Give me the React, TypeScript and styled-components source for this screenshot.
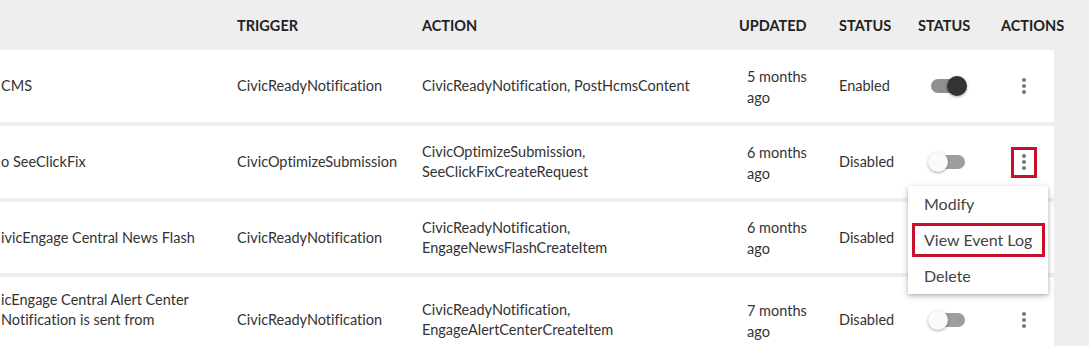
import styled, { createGlobalStyle } from "styled-components";

const GlobalStyle = createGlobalStyle`
  html, body {
    margin: 0;
    padding: 0;
    background: #eeeeee;
    font-family: Lato, "Open Sans", sans-serif;
    color: #333333;
    overflow: hidden;
    font-variant-ligatures: none;
  }
`;

type Workflow = {
  name: string[];
  trigger: string;
  action: string[];
  updated: string;
  enabled: boolean;
  height: number;
  nameTop?: number;
};

const workflows: Workflow[] = [
  {
    name: ["CMS"],
    trigger: "CivicReadyNotification",
    action: ["CivicReadyNotification, PostHcmsContent"],
    updated: "5 months ago",
    enabled: true,
    height: 72,
  },
  {
    name: ["o SeeClickFix"],
    trigger: "CivicOptimizeSubmission",
    action: ["CivicOptimizeSubmission,", "SeeClickFixCreateRequest"],
    updated: "6 months ago",
    enabled: false,
    height: 72,
  },
  {
    name: ["ivicEngage Central News Flash"],
    trigger: "CivicReadyNotification",
    action: ["CivicReadyNotification,", "EngageNewsFlashCreateItem"],
    updated: "6 months ago",
    enabled: false,
    height: 71,
  },
  {
    name: ["icEngage Central Alert Center", "Notification is sent from"],
    trigger: "CivicReadyNotification",
    action: ["CivicReadyNotification,", "EngageAlertCenterCreateItem"],
    updated: "7 months ago",
    enabled: false,
    height: 86,
    nameTop: 13,
  },
];

const columns = "229px 185px 317px 100px 79px 83px 61px";

const KebabIcon = () => (
  <svg width="4" height="16" viewBox="0 0 4 16">
    <circle cx="2" cy="2" r="2" fill="#757575" />
    <circle cx="2" cy="8" r="2" fill="#757575" />
    <circle cx="2" cy="14" r="2" fill="#757575" />
  </svg>
);

const App = () => {
  return (
    <>
      <GlobalStyle />
      <Page>
        <HeaderRow>
          <HeadCell />
          <HeadCell>Trigger</HeadCell>
          <HeadCell>Action</HeadCell>
          <HeadCell>Updated</HeadCell>
          <HeadCell>Status</HeadCell>
          <HeadCell>Status</HeadCell>
          <HeadCell>Actions</HeadCell>
        </HeaderRow>
        {workflows.map((w, i) => (
          <Row key={i} $height={w.height}>
            <NameCell $top={w.nameTop}>
              {w.name.map((line) => (
                <Line key={line}>{line}</Line>
              ))}
            </NameCell>
            <Cell>{w.trigger}</Cell>
            <Cell>
              {w.action.map((line) => (
                <Line key={line}>{line}</Line>
              ))}
            </Cell>
            <UpdatedCell>{w.updated}</UpdatedCell>
            <Cell>{w.enabled ? "Enabled" : "Disabled"}</Cell>
            <ToggleCell>
              <Switch $on={w.enabled}>
                <Thumb $on={w.enabled} />
              </Switch>
            </ToggleCell>
            <ActionsCell>
              <KebabButton $highlight={i === 1}>
                <KebabIcon />
              </KebabButton>
              {i === 1 && (
                <Menu>
                  <MenuItem>Modify</MenuItem>
                  <MenuItem $highlight>View Event Log</MenuItem>
                  <MenuItem>Delete</MenuItem>
                </Menu>
              )}
            </ActionsCell>
          </Row>
        ))}
      </Page>
    </>
  );
};

export default App;

const Page = styled.div`
  width: 1054px;
  display: flex;
  flex-direction: column;
`;

const HeaderRow = styled.div`
  display: grid;
  grid-template-columns: ${columns};
  height: 50px;
  align-items: center;
`;

const HeadCell = styled.div`
  padding-left: 8px;
  font-size: 14.5px;
  font-weight: 700;
  text-transform: uppercase;
  color: #222222;
  white-space: nowrap;
`;

const Row = styled.div<{ $height: number }>`
  display: grid;
  grid-template-columns: ${columns};
  height: ${(p) => p.$height}px;
  flex-shrink: 0;
  margin-bottom: 4px;
  align-items: center;
  background: #ffffff;
  font-size: 14.5px;
  line-height: 20px;
  color: #333333;
`;

const Cell = styled.div`
  padding-left: 8px;
`;

const NameCell = styled.div<{ $top?: number }>`
  padding-left: 1px;
  white-space: nowrap;
  ${(p) =>
    p.$top !== undefined &&
    `
    align-self: start;
    padding-top: ${p.$top}px;
  `}
`;

const Line = styled.div`
  white-space: nowrap;
`;

const UpdatedCell = styled.div`
  padding: 1px 14px 0 16px;
  line-height: 21px;
`;

const ToggleCell = styled.div`
  padding-left: 21px;
  display: flex;
  align-items: center;
`;

const Switch = styled.div<{ $on: boolean }>`
  position: relative;
  width: 34px;
  height: 14px;
  border-radius: 7px;
  background: ${(p) => (p.$on ? "#8f8f8f" : "#9e9e9e")};
`;

const Thumb = styled.div<{ $on: boolean }>`
  position: absolute;
  top: -3px;
  left: ${(p) => (p.$on ? "16px" : "-3px")};
  width: 20px;
  height: 20px;
  border-radius: 50%;
  background: ${(p) => (p.$on ? "#333333" : "#fafafa")};
  box-shadow: 0 1px 3px rgba(0, 0, 0, 0.35);
`;

const ActionsCell = styled.div`
  position: relative;
  display: flex;
  justify-content: center;
  align-items: center;
  align-self: stretch;
`;

const KebabButton = styled.button<{ $highlight?: boolean }>`
  all: unset;
  box-sizing: border-box;
  width: 26px;
  height: 31px;
  display: flex;
  align-items: center;
  justify-content: center;
  border: 3px solid ${(p) => (p.$highlight ? "#c8102e" : "transparent")};
  margin-left: 1px;
`;

const Menu = styled.div`
  position: absolute;
  top: 60px;
  left: -85px;
  width: 140px;
  background: #ffffff;
  box-shadow: 0 2px 6px rgba(0, 0, 0, 0.25), 0 1px 2px rgba(0, 0, 0, 0.12);
  z-index: 10;
  display: flex;
  flex-direction: column;
`;

const MenuItem = styled.div<{ $highlight?: boolean }>`
  box-sizing: border-box;
  height: 36px;
  display: flex;
  align-items: center;
  padding-left: 16px;
  font-size: 16px;
  color: #444444;
  white-space: nowrap;
  ${(p) =>
    p.$highlight &&
    `
    margin: 1px 3px 1px 4px;
    padding-left: 9px;
    border: 3px solid #c8102e;
    height: 34px;
  `}
`;
